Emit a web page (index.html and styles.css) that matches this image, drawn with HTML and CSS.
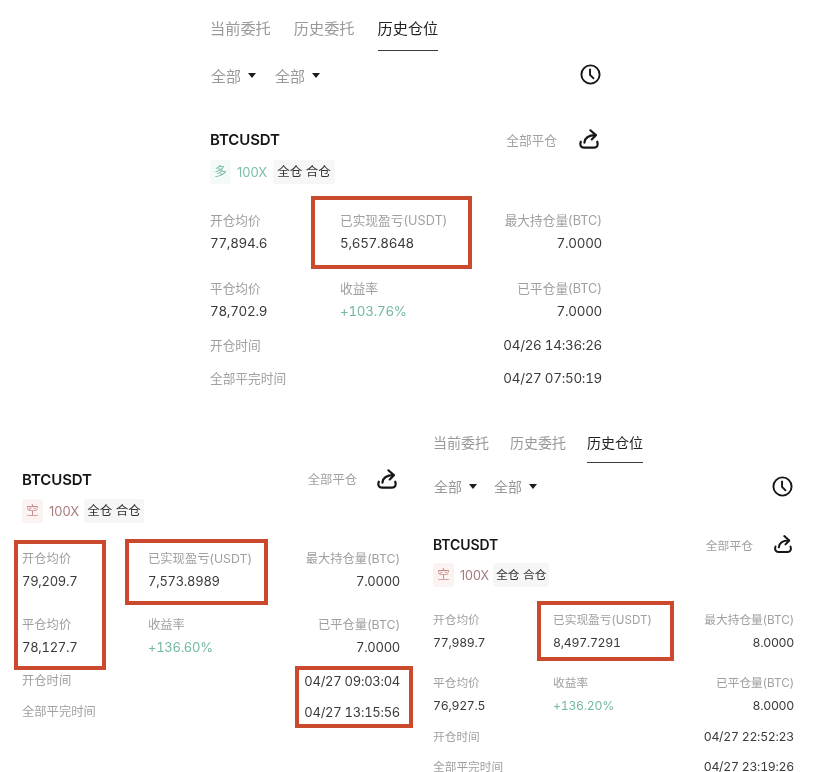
FILE: index.html
```html
<!DOCTYPE html>
<html lang="zh-CN">
<head>
<meta charset="utf-8">
<title>历史仓位</title>
<link rel="stylesheet" href="styles.css">
</head>
<body>
<main class="sheet">

<section class="shot shot-a">
  <nav class="tabs">
    <span class="tab">当前委托</span><span class="tab">历史委托</span><span class="tab tab-on">历史仓位</span>
  </nav>
  <div class="filters">
    <span class="filter">全部<i class="caret"></i></span><span class="filter">全部<i class="caret"></i></span>
    <svg class="ico-clock" viewBox="0 0 24 24"><circle cx="12" cy="12" r="10.4"/><path d="M11.500 5.500V12.500L16 17"/></svg>
  </div>
  <div class="head">
    <b class="sym">BTCUSDT</b><span class="closeall">全部平仓</span>
    <svg class="ico-share" viewBox="0 0 24 24"><path d="M3 15C1.500 19 3.500 21.500 6.500 21.500H17.500C20.500 21.500 22.500 19 21 15"/><path d="M7 16C7.500 10.500 11.500 7.800 19 7.800"/><path d="M13.500 2.500L19.500 7.800L15 12.500"/></svg>
  </div>
  <div class="tags">
    <span class="side long">多</span><span class="lev long-t">100X</span><span class="mode">全仓 合仓</span>
  </div>
  <div class="stats">
    <div class="cell"><span class="k">开仓均价</span><span class="v">77,894.6</span></div>
    <div class="cell"><span class="k">已实现盈亏(USDT)</span><span class="v">5,657.8648</span></div>
    <div class="cell end"><span class="k">最大持仓量(BTC)</span><span class="v">7.0000</span></div>
    <div class="cell"><span class="k">平仓均价</span><span class="v">78,702.9</span></div>
    <div class="cell"><span class="k">收益率</span><span class="v gain">+103.76%</span></div>
    <div class="cell end"><span class="k">已平仓量(BTC)</span><span class="v">7.0000</span></div>
  </div>
  <div class="line"><span class="k">开仓时间</span><span class="v">04/26 14:36:26</span></div>
  <div class="line"><span class="k">全部平完时间</span><span class="v">04/27 07:50:19</span></div>
</section>

<section class="shot shot-b">
  <div class="head">
    <b class="sym">BTCUSDT</b><span class="closeall">全部平仓</span>
    <svg class="ico-share" viewBox="0 0 24 24"><path d="M3 15C1.500 19 3.500 21.500 6.500 21.500H17.500C20.500 21.500 22.500 19 21 15"/><path d="M7 16C7.500 10.500 11.500 7.800 19 7.800"/><path d="M13.500 2.500L19.500 7.800L15 12.500"/></svg>
  </div>
  <div class="tags">
    <span class="side short">空</span><span class="lev short-t">100X</span><span class="mode">全仓 合仓</span>
  </div>
  <div class="stats">
    <div class="cell"><span class="k">开仓均价</span><span class="v">79,209.7</span></div>
    <div class="cell"><span class="k">已实现盈亏(USDT)</span><span class="v">7,573.8989</span></div>
    <div class="cell end"><span class="k">最大持仓量(BTC)</span><span class="v">7.0000</span></div>
    <div class="cell"><span class="k">平仓均价</span><span class="v">78,127.7</span></div>
    <div class="cell"><span class="k">收益率</span><span class="v gain">+136.60%</span></div>
    <div class="cell end"><span class="k">已平仓量(BTC)</span><span class="v">7.0000</span></div>
  </div>
  <div class="line"><span class="k">开仓时间</span><span class="v">04/27 09:03:04</span></div>
  <div class="line"><span class="k">全部平完时间</span><span class="v">04/27 13:15:56</span></div>
</section>

<section class="shot shot-c">
  <nav class="tabs">
    <span class="tab">当前委托</span><span class="tab">历史委托</span><span class="tab tab-on">历史仓位</span>
  </nav>
  <div class="filters">
    <span class="filter">全部<i class="caret"></i></span><span class="filter">全部<i class="caret"></i></span>
    <svg class="ico-clock" viewBox="0 0 24 24"><circle cx="12" cy="12" r="10.4"/><path d="M11.500 5.500V12.500L16 17"/></svg>
  </div>
  <div class="head">
    <b class="sym">BTCUSDT</b><span class="closeall">全部平仓</span>
    <svg class="ico-share" viewBox="0 0 24 24"><path d="M3 15C1.500 19 3.500 21.500 6.500 21.500H17.500C20.500 21.500 22.500 19 21 15"/><path d="M7 16C7.500 10.500 11.500 7.800 19 7.800"/><path d="M13.500 2.500L19.500 7.800L15 12.500"/></svg>
  </div>
  <div class="tags">
    <span class="side short">空</span><span class="lev short-t">100X</span><span class="mode">全仓 合仓</span>
  </div>
  <div class="stats">
    <div class="cell"><span class="k">开仓均价</span><span class="v">77,989.7</span></div>
    <div class="cell"><span class="k">已实现盈亏(USDT)</span><span class="v">8,497.7291</span></div>
    <div class="cell end"><span class="k">最大持仓量(BTC)</span><span class="v">8.0000</span></div>
    <div class="cell"><span class="k">平仓均价</span><span class="v">76,927.5</span></div>
    <div class="cell"><span class="k">收益率</span><span class="v gain">+136.20%</span></div>
    <div class="cell end"><span class="k">已平仓量(BTC)</span><span class="v">8.0000</span></div>
  </div>
  <div class="line"><span class="k">开仓时间</span><span class="v">04/27 22:52:23</span></div>
  <div class="line"><span class="k">全部平完时间</span><span class="v">04/27 23:19:26</span></div>
</section>

<div class="mark mark-1"></div>
<div class="mark mark-2"></div>
<div class="mark mark-3"></div>
<div class="mark mark-4"></div>
<div class="mark mark-5"></div>

</main>
</body>
</html>
```
FILE: styles.css
```css
* { box-sizing: border-box; }
html, body { margin: 0; background: #fff; }
body {
  font-family: Inter, "Noto Sans CJK SC", sans-serif;
  color: #2b2b2b;
}
.sheet {
  position: relative;
  width: 828px;
  height: 772px;
  overflow: hidden;
}

/* each pasted screenshot sits freely on the collage */
.shot {
  position: absolute;
  display: flex;
  flex-direction: column;
  font-size: 13.400px;
  filter: blur(0.4px);
}
.shot-a {
  left: 210px; top: 14px; width: 392px;
  --col2: 130px; --row-gap: 22px; --val: 23px; --line1: 33px; --line2: 33px;
}
.shot-b {
  left: 22px; top: 466px; width: 378px; font-size: 13px;
  --col2: 126px; --row-gap: 20px; --val: 23px; --line1: 33px; --line2: 31px;
}
.shot-c {
  left: 433px; top: 430px; width: 361px; font-size: 12.300px;
  --col2: 120px; --row-gap: 18px; --val: 22.500px; --line1: 30px; --line2: 30px;
}

.tabs { display: flex; gap: 23px; height: 36px; font-size: 15.200px; }
.tab { color: #999; line-height: 30px; height: 37px; }
.tab-on { color: #222; border-bottom: 1.500px solid #3a3a3a; }
.shot-c .tabs { gap: 21px; height: 33px; font-size: 14px; }
.shot-c .tab { line-height: 26px; height: 33px; }

.filters { display: flex; align-items: center; gap: 19px; height: 50px; padding-left: 1px; font-size: 15px; color: #999; }
.shot-c .filters { height: 46px; font-size: 14px; gap: 17px; }
.filter { display: flex; align-items: center; gap: 7px; }
.caret {
  width: 0; height: 0;
  border-left: 4.500px solid transparent;
  border-right: 4.500px solid transparent;
  border-top: 5px solid #1c1c1c;
}
.ico-clock {
  margin-left: auto; margin-right: 1px; margin-bottom: 2px;
  width: 21px; height: 21px;
  fill: none; stroke: #161616; stroke-width: 2.200;
}
.shot-c .ico-clock { margin-bottom: 0; }

.head { display: flex; align-items: center; height: 26px; margin-top: 26px; }
.shot-b .head { margin-top: 0; }
.shot-c .head { margin-top: 22px; }
.sym { font-size: 15px; font-weight: 600; color: #161616; letter-spacing: -0.1px; }
.shot-c .sym { font-size: 14px; }
.closeall { margin-left: auto; margin-right: 21px; font-size: 12.700px; color: #a0a0a0; }
.shot-b .closeall { margin-right: 19px; font-size: 12.300px; }
.shot-c .closeall { font-size: 11.800px; margin-right: 20px; }
.ico-share {
  width: 22px; height: 22px; margin-right: 2px;
  fill: none; stroke: #161616; stroke-width: 2.400; stroke-linejoin: round; stroke-linecap: round;
}
.shot-c .ico-share { width: 20px; height: 20px; margin-right: 1px; }

.tags { display: flex; align-items: center; gap: 6px; height: 24px; margin-top: 8px; font-size: 12.500px; }
.shot-b .tags { margin-top: 7px; }
.shot-c .tags { margin-top: 6px; }
.side { width: 21px; height: 24px; line-height: 24px; text-align: center; border-radius: 3px; }
.long { background: #f3faf7; color: #6fb8a0; }
.short { background: #fbf3f2; color: #c98a8a; }
.lev { font-size: 13px; }
.shot-c .lev { font-size: 12.500px; }
.long-t { color: #7bbda8; }
.short-t { color: #a87b7b; }
.mode { background: #f6f6f6; border-radius: 3px; padding: 0 3px; height: 24px; line-height: 24px; margin-left: -1px; color: #333; }
.shot-a .mode { margin-left: 0; padding: 0 4px; }
.shot-c .mode { font-size: 11.800px; margin-left: -2px; }

.stats {
  display: grid;
  grid-template-columns: var(--col2) 1fr auto;
  row-gap: var(--row-gap);
  margin-top: 25px;
}
.shot-b .stats { margin-top: 24px; }
.shot-c .stats { margin-top: 22px; }
.cell { display: flex; flex-direction: column; }
.cell .k, .cell .v { height: var(--val); line-height: var(--val); }
.end { align-items: flex-end; }
.k { color: #a0a0a0; font-size: 12.700px; }
.shot-b .k { font-size: 12.300px; }
.shot-c .k { font-size: 11.700px; }
.v { color: #3a3a3a; font-variant-numeric: tabular-nums; letter-spacing: -0.27px; }
.gain { color: #74b8a2; }

.line { display: flex; justify-content: space-between; align-items: center; height: 20px; }
.line .v { padding-top: 2px; }
.line:nth-of-type(n) { margin-top: calc(var(--line2) - 20px); }
.stats + .line { margin-top: calc(var(--line1) - 22px); }

/* red annotation boxes drawn over the collage */
.mark { position: absolute; border: 4px solid #cb4a2d; }
.mark-1 { left: 311px; top: 196px; width: 161px; height: 73px; }
.mark-2 { left: 14px; top: 540px; width: 92px; height: 130px; }
.mark-3 { left: 125px; top: 539px; width: 143px; height: 66px; }
.mark-4 { left: 295px; top: 666px; width: 118px; height: 62px; }
.mark-5 { left: 537px; top: 601px; width: 137px; height: 60px; }
```
